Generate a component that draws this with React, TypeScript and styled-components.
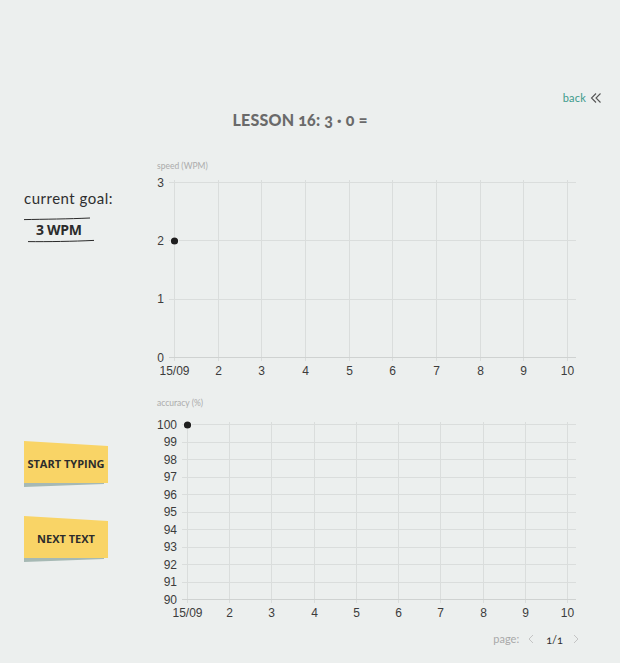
import React from "react";
import styled, { createGlobalStyle } from "styled-components";

const Global = createGlobalStyle`
  html, body { margin: 0; padding: 0; background: #ecefee; }
  body { font-family: Lato, "Open Sans", sans-serif; color: #333; }
`;

const Page = styled.div`
  width: 620px;
  min-height: 663px;
  background: #ecefee;
  display: flex;
  flex-direction: column;
`;

const TopBar = styled.div`
  margin-top: 90px;
  height: 16px;
  display: flex;
  justify-content: flex-end;
  padding-right: 18px;
`;

const BackLink = styled.a`
  display: flex;
  align-items: center;
  gap: 4px;
  font: 400 11px/16px Lato, sans-serif;
  color: #3d9a8b;
  letter-spacing: 0.2px;
  text-decoration: none;
  cursor: pointer;
`;

const Title = styled.h1`
  margin: 4px 0 0;
  padding-right: 20px;
  text-align: center;
  font: 900 16px/20px Lato, sans-serif;
  font-variant-numeric: oldstyle-nums;
  color: #6a6a6a;
  letter-spacing: 0.2px;
`;

const Main = styled.div`
  margin-top: 28px;
  display: grid;
  grid-template-columns: 150px 440px;
  grid-template-rows: 222px 225px;
  row-gap: 15px;
`;

const GoalBlock = styled.div`
  padding: 31px 0 0 24px;
  display: flex;
  flex-direction: column;
  align-items: flex-start;
`;

const GoalLabel = styled.div`
  font: 400 15px/18px Lato, sans-serif;
  letter-spacing: 0.5px;
  color: #2e2e2e;
`;

const Stroke = styled.svg`
  display: block;
  width: 72px;
  height: 4px;
`;

const GoalValue = styled.div`
  padding-left: 12px;
  font: 700 14px/18px "Open Sans", sans-serif;
  color: #2b2b2b;
  letter-spacing: -0.3px;
`;

const ButtonColumn = styled.div`
  padding: 46px 0 0 24px;
  display: flex;
  flex-direction: column;
  gap: 29px;
`;

const StickyButton = styled.button`
  position: relative;
  width: 84px;
  height: 46px;
  border: 0;
  padding: 0;
  background: transparent;
  cursor: pointer;
  display: flex;
  align-items: center;
  justify-content: center;
  font: 700 11px/14px "Open Sans", sans-serif;
  color: #2c2c2c;
  &::before {
    content: "";
    position: absolute;
    left: 0;
    top: 6px;
    width: 80px;
    height: 40px;
    background: #a6b9b4;
    clip-path: polygon(0 0, 100% 0, 100% calc(100% - 3px), 0 100%);
  }
  &::after {
    content: "";
    position: absolute;
    left: 0;
    top: 0;
    width: 84px;
    height: 42px;
    background: #f9d466;
    clip-path: polygon(0 0, 100% 5px, 100% 100%, 0 100%);
  }
`;

const ButtonText = styled.span`
  position: relative;
  z-index: 1;
  margin-top: -1px;
  white-space: nowrap;
`;

const ChartSvg = styled.svg`
  display: block;
  font-family: "Liberation Sans", Arial, sans-serif;
`;

const Pager = styled.div`
  margin-top: 12px;
  display: flex;
  justify-content: flex-end;
  align-items: center;
  padding-right: 40px;
  height: 14px;
  font: 400 11px/14px Lato, sans-serif;
`;

const PagerLabel = styled.span`
  color: #a9a9a9;
  margin-right: 8px;
`;

const PagerNum = styled.span`
  color: #2f2f2f;
  margin: 2px 9px 0 11px;
  font-variant-numeric: oldstyle-nums;
`;

const PagerArrow = styled.svg`
  display: block;
  width: 8px;
  height: 10px;
`;

type ChartProps = {
  top: number;
  height: number;
  label: string;
  labelY: number;
  axisX: number;
  rightX: number;
  yTop: number;
  yBottom: number;
  yLabels: string[];
  yLabelRight: number;
  xLabels: string[];
  xLast: number;
  labelBaseline: number;
  point: [number, number];
};

function Chart(p: ChartProps) {
  const left = 150;
  const width = 440;
  const n = p.yLabels.length;
  const ys = p.yLabels.map((_, i) => p.yTop + ((p.yBottom - p.yTop) * i) / (n - 1));
  const xs = p.xLabels.map((_, i) => p.axisX + ((p.xLast - p.axisX) * i) / (p.xLabels.length - 1));
  return (
    <ChartSvg
      width={width}
      height={p.height}
      viewBox={`${left} ${p.top} ${width} ${p.height}`}
    >
      <text x={157} y={p.labelY} fontSize="8.5" fill="#ababab" fontFamily="Lato, sans-serif">
        {p.label}
      </text>
      {xs.map((x, i) => (
        <line key={"v" + i} x1={Math.round(x) + 0.5} x2={Math.round(x) + 0.5} y1={p.yTop - 2} y2={p.yBottom + 4} stroke="#dadddc" strokeWidth={1} />
      ))}
      {ys.map((y, i) => (
        <line key={"h" + i} x1={p.axisX - 5} x2={p.rightX} y1={Math.round(y) + 0.5} y2={Math.round(y) + 0.5} stroke={i === n - 1 ? "#cfd2d1" : "#dadddc"} strokeWidth={1} />
      ))}
      {ys.map((y, i) => (
        <text key={"yl" + i} x={p.yLabelRight} y={y + 4.5} fontSize="12" fill="#3c3c3c" textAnchor="end">
          {p.yLabels[i]}
        </text>
      ))}
      {xs.map((x, i) => (
        <text key={"xl" + i} x={Math.round(x) + 0.5} y={p.labelBaseline} fontSize="12" fill="#3c3c3c" textAnchor="middle">
          {p.xLabels[i]}
        </text>
      ))}
      <circle cx={p.point[0]} cy={p.point[1]} r={4.3} fill="#fff" opacity={0.6} />
      <circle cx={p.point[0]} cy={p.point[1]} r={3.6} fill="#1f1f1f" />
    </ChartSvg>
  );
}

const xLabels = ["15/09", "2", "3", "4", "5", "6", "7", "8", "9", "10"];

export default function App() {
  return (
    <Page>
      <Global />
      <TopBar>
        <BackLink>
          back
          <svg width="12" height="12" viewBox="0 0 12 12" fill="none" stroke="#555" strokeWidth="1.1">
            <polyline points="6,1.5 1.5,6 6,10.5" />
            <polyline points="10.5,1.5 6,6 10.5,10.5" />
          </svg>
        </BackLink>
      </TopBar>
      <Title>LESSON 16: 3 · 0 =</Title>
      <Main>
        <GoalBlock>
          <GoalLabel>current goal:</GoalLabel>
          <Stroke viewBox="0 0 72 4" style={{ marginTop: 10 }}>
            <path d="M0 2.6 C 20 2.2, 45 2.0, 66 1.0" stroke="#2a2a2a" strokeWidth="1" fill="none" />
          </Stroke>
          <GoalValue>3 WPM</GoalValue>
          <Stroke viewBox="0 0 72 4" style={{ marginLeft: 4 }}>
            <path d="M0 2.6 C 20 2.8, 45 2.4, 66 1.4" stroke="#2a2a2a" strokeWidth="1" fill="none" />
          </Stroke>
        </GoalBlock>
        <Chart
          top={158}
          height={222}
          label="speed (WPM)"
          labelY={169}
          axisX={174}
          rightX={576}
          yTop={182}
          yBottom={357}
          yLabels={["3", "2", "1", "0"]}
          yLabelRight={164}
          xLabels={xLabels}
          xLast={567}
          labelBaseline={375}
          point={[174.5, 241]}
        />
        <ButtonColumn>
          <StickyButton>
            <ButtonText>START TYPING</ButtonText>
          </StickyButton>
          <StickyButton>
            <ButtonText>NEXT TEXT</ButtonText>
          </StickyButton>
        </ButtonColumn>
        <Chart
          top={395}
          height={225}
          label="accuracy (%)"
          labelY={406}
          axisX={187}
          rightX={576}
          yTop={424}
          yBottom={599}
          yLabels={["100", "99", "98", "97", "96", "95", "94", "93", "92", "91", "90"]}
          yLabelRight={177}
          xLabels={xLabels}
          xLast={567}
          labelBaseline={617}
          point={[187.5, 425]}
        />
      </Main>
      <Pager>
        <PagerLabel>page:</PagerLabel>
        <PagerArrow viewBox="0 0 8 10" fill="none" stroke="#c4c4c4" strokeWidth="1">
          <polyline points="6,1 2,5 6,9" />
        </PagerArrow>
        <PagerNum>1/1</PagerNum>
        <PagerArrow viewBox="0 0 8 10" fill="none" stroke="#c4c4c4" strokeWidth="1">
          <polyline points="2,1 6,5 2,9" />
        </PagerArrow>
      </Pager>
    </Page>
  );
}
